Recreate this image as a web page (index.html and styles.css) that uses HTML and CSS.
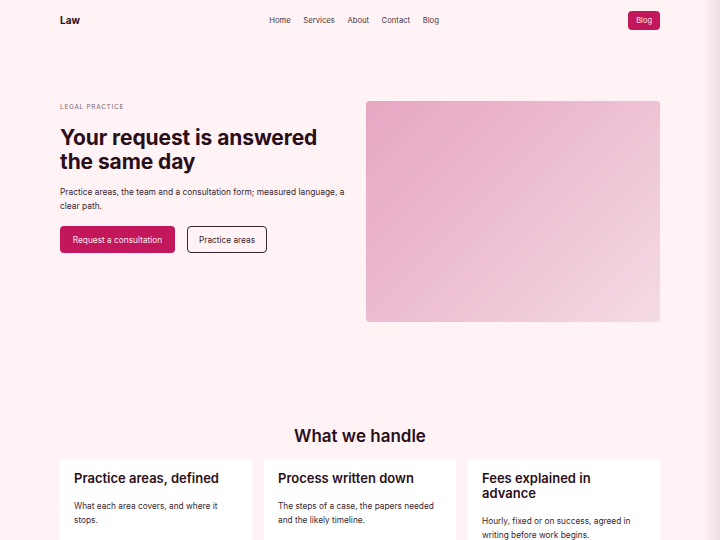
FILE: index.html
```html
<!DOCTYPE html>
<html lang="en">
<head>
<meta charset="UTF-8">
<meta name="viewport" content="width=device-width, initial-scale=1.0">
<title>Law</title>
<link rel="stylesheet" href="styles.css">
</head>
<body>

<header class="nav">
  <a class="brand" href="#">Law</a>
  <nav class="links">
    <a href="#">Home</a>
    <a href="#">Services</a>
    <a href="#">About</a>
    <a href="#">Contact</a>
    <a href="#">Blog</a>
  </nav>
  <a class="nav-btn" href="#">Blog</a>
</header>

<section class="hero">
  <div class="hero-text">
    <p class="eyebrow">LEGAL PRACTICE</p>
    <h1>Your request is answered the same day</h1>
    <p class="lead">Practice areas, the team and a consultation form; measured language, a clear path.</p>
    <div class="actions">
      <a class="btn primary" href="#">Request a consultation</a>
      <a class="btn outline" href="#">Practice areas</a>
    </div>
  </div>
  <div class="hero-media"></div>
</section>

<section class="handle">
  <h2>What we handle</h2>
  <div class="cards">
    <div class="card">
      <h3>Practice areas, defined</h3>
      <p>What each area covers, and where it stops.</p>
    </div>
    <div class="card">
      <h3>Process written down</h3>
      <p>The steps of a case, the papers needed and the likely timeline.</p>
    </div>
    <div class="card">
      <h3>Fees explained in advance</h3>
      <p>Hourly, fixed or on success, agreed in writing before work begins.</p>
    </div>
  </div>
</section>

<div class="edge"></div>

</body>
</html>
```

FILE: styles.css
```css
body {
  margin: 0;
  background: #fff3f6;
  color: #2a0f1a;
  font-family: Inter, "Noto Sans", sans-serif;
}
a { text-decoration: none; color: inherit; }

.nav {
  width: 600px; margin: 0 auto;
  height: 40px;
  display: flex; align-items: center; justify-content: space-between;
}
.brand { font-size: 10px; font-weight: 700; }
.links { display: flex; gap: 12.5px; font-size: 7.7px; color: #4a3640; }
.nav-btn {
  background: #c2185b; color: #fde6ee;
  font-size: 7.5px;
  padding: 0 8px; height: 19px; line-height: 19px;
  border-radius: 4px;
}

.hero {
  width: 600px; margin: 0 auto;
  display: grid; grid-template-columns: 1fr 1fr; gap: 12px;
  padding: 61px 0 60px;
  align-items: start;
}
.eyebrow {
  margin: 1px 0 0;
  font-size: 6.5px; letter-spacing: 0.7px;
  line-height: 10px;
  color: #7b6a71;
}
h1 {
  margin: 14px 0 11px;
  font-size: 21px; line-height: 24px;
  font-weight: 700; letter-spacing: -0.1px;
}
.lead {
  margin: 0;
  font-size: 8.4px; line-height: 14px;
  color: #3a2630;
}
.actions { display: flex; gap: 12px; margin-top: 13px; }
.btn {
  height: 27px; box-sizing: border-box;
  display: flex; align-items: center; justify-content: center;
  font-size: 8.3px; border-radius: 4px;
}
.primary { background: #c2185b; color: #fde6ee; width: 115px; }
.outline { border: 1px solid #3a2630; color: #3a2630; width: 80px; }
.hero-media {
  height: 221px; border-radius: 4px;
  background: linear-gradient(135deg, #e7a6c3 0%, #ecbcd0 45%, #f4dbe4 100%);
  box-shadow: 0 0 1px rgba(194, 24, 91, 0.15);
}

.handle { width: 600px; margin: 0 auto; padding-top: 43px; }
h2 {
  margin: 0 0 12px;
  text-align: center;
  font-size: 17px; line-height: 22px; font-weight: 600;
}
.cards { display: grid; grid-template-columns: repeat(3, 1fr); gap: 12px; }
.card {
  background: #ffffff; border-radius: 4px;
  padding: 12px 14px 20px;
  min-height: 100px;
}
h3 {
  margin: 0;
  font-size: 13px; line-height: 15px; font-weight: 600;
}
.card p {
  margin: 13px 0 0;
  font-size: 8.3px; line-height: 14px;
  color: #3a2630;
}

.edge {
  position: fixed; top: 0; right: 0;
  width: 16px; height: 100%;
  background: linear-gradient(to right, rgba(120, 90, 100, 0), rgba(120, 90, 100, 0.14));
  pointer-events: none;
}
```
